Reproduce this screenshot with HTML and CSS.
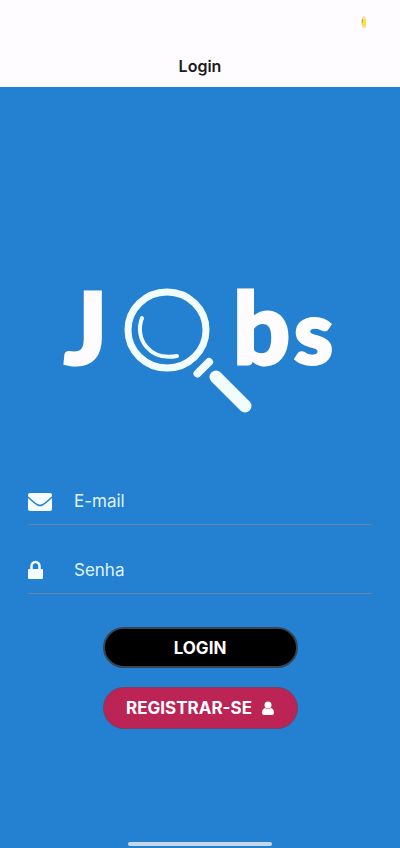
FILE: index.html
```html
<!DOCTYPE html>
<html lang="pt-BR">
<head>
<meta charset="utf-8">
<meta name="viewport" content="width=device-width, initial-scale=1">
<title>Login</title>
<link rel="stylesheet" href="styles.css">
</head>
<body>
<header class="header">
  <div class="status">
    <svg class="battery" viewBox="0 0 6 12" aria-hidden="true"><path fill="#fbdccb" d="M1 1h1V0h2v1h1v11H1V9H0V4h1z"/><path fill="#f9e23c" d="M1 3h4v7H1z"/><path fill="#c9a62c" d="M1 3h1v4H1z"/></svg>
  </div>
  <h1 class="title">Login</h1>
</header>
<main class="screen">
  <svg class="logo" viewBox="0 -30 280 170" role="img" aria-label="Jobs">
    <g class="logo-text">
      <text x="4" y="79">J</text>
      <text x="173" y="79">b<tspan class="logo-small" x="234">s</tspan></text>
    </g>
    <g class="logo-lens">
      <ellipse cx="107" cy="45" rx="39" ry="38" stroke-width="7"/>
      <path d="M82 33C74 54 90 76 117 71" stroke-width="4"/>
      <path d="M137.500 88.500 149 77" stroke-width="8"/>
      <path d="M156 92 185 121" stroke-width="13"/>
    </g>
  </svg>
  <form class="form">
    <div class="field">
      <label class="field-icon" for="email" aria-label="E-mail">
        <svg width="24" height="20" viewBox="0 0 24 20" aria-hidden="true"><rect y="2" width="24" height="18" rx="2" fill="#f4fcff"/><path d="M0 6C4 10 8 13 10 14Q12 15 14 14C16 13 20 10 24 6" fill="none" stroke="#2480d0" stroke-width="1.500"/></svg>
      </label>
      <input class="input" id="email" type="email" placeholder="E-mail">
    </div>
    <div class="field">
      <label class="field-icon" for="senha" aria-label="Senha">
        <svg width="16" height="20" viewBox="0 0 16 20" aria-hidden="true"><rect y="9" width="15" height="10" rx="1" fill="#f4fcff"/><path d="M3.500 10V6a4 4 0 0 1 8 0v4" fill="none" stroke="#f4fcff" stroke-width="2.500"/></svg>
      </label>
      <input class="input" id="senha" type="password" placeholder="Senha">
    </div>
    <div class="actions">
      <button class="button button-login" type="submit">LOGIN</button>
      <button class="button button-register" type="button">REGISTRAR-SE
        <svg width="12" height="14" viewBox="0 0 12 14" aria-hidden="true"><circle cx="6" cy="4" r="3.500" fill="#fff"/><path fill="#fff" d="M3 7Q6 9 9 7Q12 8 12 12Q12 14 10 14H2Q0 14 0 12Q0 8 3 7z"/></svg>
      </button>
    </div>
  </form>
  <div class="home-bar"></div>
</main>
</body>
</html>
```
FILE: styles.css
```css
* {
  box-sizing: border-box;
}

body {
  display: flex;
  flex-direction: column;
  min-height: 100vh;
  margin: 0;
  background: #2480d0;
  font-family: Inter, "Liberation Sans", sans-serif;
}

.header {
  padding-bottom: 11px;
  background: #fefcff;
}

.status {
  display: flex;
  justify-content: flex-end;
  height: 56px;
  padding: 16px 33px 0 0;
}

.battery {
  width: 6px;
  height: 12px;
}

.title {
  margin: 0;
  color: #1c1a20;
  font-size: 16px;
  font-weight: 600;
  line-height: 20px;
  text-align: center;
}

.screen {
  display: flex;
  flex: 1;
  flex-direction: column;
  align-items: center;
  padding: 0 28px 2px;
}

.logo {
  width: 280px;
  height: 170px;
  margin-top: 168px;
}

.logo-text {
  fill: #fefcff;
  stroke: #fefcff;
  stroke-width: 3px;
  font-family: Lato, sans-serif;
  font-size: 100px;
  font-weight: 900;
}

.logo-small {
  font-size: 88px;
}

.logo-lens {
  fill: none;
  stroke: #f1fcff;
  stroke-linecap: round;
}

.form {
  width: 100%;
  margin-top: 52px;
}

.field {
  display: flex;
  align-items: center;
  height: 48px;
  margin-bottom: 21px;
  border-bottom: 1px solid #6286ad;
}

.field-icon {
  display: flex;
  width: 46px;
}

.input {
  flex: 1;
  min-width: 0;
  padding: 0;
  border: 0;
  outline: 0;
  background: transparent;
  color: #dff4ff;
  font: 400 17px/24px Inter, "Liberation Sans", sans-serif;
}

.input::placeholder {
  color: #dff4ff;
  opacity: 1;
}

.actions {
  display: flex;
  flex-direction: column;
  align-items: center;
  gap: 19px;
  padding-top: 12px;
}

.button {
  display: flex;
  align-items: center;
  justify-content: center;
  gap: 10px;
  width: 195px;
  height: 41px;
  padding: 0;
  border: 2px solid #364555;
  border-radius: 21px;
  color: #fff;
  font: 700 17px/24px Inter, "Liberation Sans", sans-serif;
}

.button-login {
  background: #000;
}

.button-register {
  height: 42px;
  border: 1px solid #784064;
  background: #bd2456;
}

.home-bar {
  width: 144px;
  height: 4px;
  margin-top: auto;
  border-radius: 2px;
  background: #c9d6e6;
}
```
